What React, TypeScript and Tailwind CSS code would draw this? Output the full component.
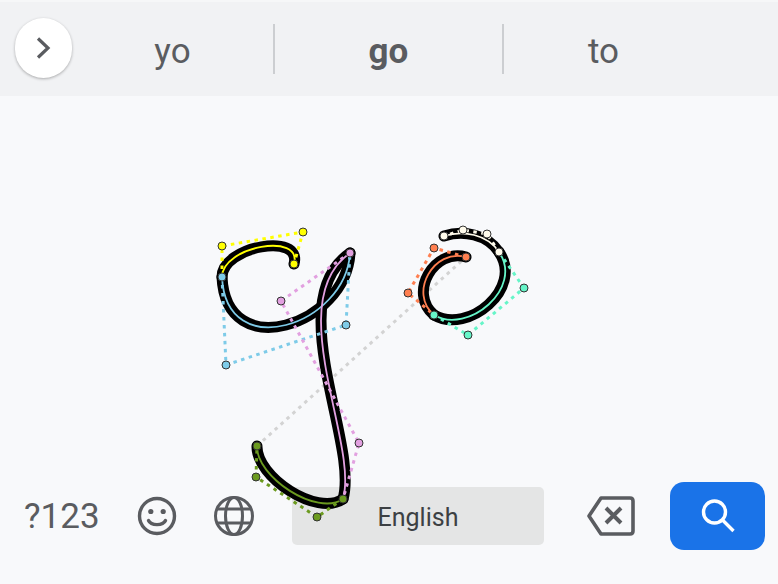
const curves = [
  { color: "#ffff00", d: "M222 277C222 246 303 232 294 264", pts: [[222, 246], [303, 232], [294, 264]], guide: "M222 277L222 246L303 232L294 264" },
  { color: "#7ecbe8", d: "M222 277C226 365 346 325 350 253", pts: [[222, 277], [226, 365], [346, 325]], guide: "M222 277L226 365L346 325L350 253" },
  { color: "#e2a0e0", d: "M350 253C281 301 359 443 343 499", pts: [[350, 253], [281, 301], [359, 443]], guide: "M350 253L281 301L359 443L343 499" },
  { color: "#6b9a1f", d: "M343 499C317 517 256 477 257 446", pts: [[343, 499], [317, 517], [256, 477], [257, 446]], guide: "M343 499L317 517L256 477L257 446" },
  { color: "#ff7f50", d: "M466 257C434 248 408 293 434 315", pts: [[466, 257], [434, 248], [408, 293]], guide: "M466 257L434 248L408 293L434 315" },
  { color: "#66f5c8", d: "M434 315C468 335 524 288 499 252", pts: [[434, 315], [468, 335], [524, 288]], guide: "M434 315L468 335L524 288L499 252" },
  { color: "#fffbeb", d: "M499 252C487 234 463 230 444 236", pts: [[499, 252], [487, 234], [463, 230], [444, 236]], guide: "M499 252L487 234L463 230L444 236" },
];

function Stroke() {
  return (
    <svg className="absolute inset-0 pointer-events-none" width="778" height="584" viewBox="0 0 778 584" fill="none">
      <path d="M257 446L466 257" stroke="#d3d3d3" strokeWidth="3" strokeDasharray="3.5 4.5" />
      {curves.map((c) => (
        <path key={c.d} d={c.d} stroke="#000" strokeWidth="11" strokeLinecap="round" />
      ))}
      {curves.map((c) => (
        <g key={c.guide}>
          <path d={c.guide} stroke={c.color} strokeWidth="3" strokeDasharray="3.5 4.5" />
          <path d={c.d} stroke={c.color} strokeWidth="1.8" strokeLinecap="round" />
          {c.pts.map(([x, y]) => (
            <circle key={`${x}-${y}`} cx={x} cy={y} r="4" fill={c.color} stroke="#333" strokeWidth="1" />
          ))}
        </g>
      ))}
    </svg>
  );
}

export default function App() {
  return (
    <div className="relative w-[778px] h-[584px] overflow-hidden bg-[#f8f9fb] flex flex-col font-['Roboto',sans-serif]">
      {/* Suggestions */}
      <div className="h-[96px] bg-[#f1f2f4] border-t-2 border-[#f6f7f8] flex items-center">
        <button className="ml-[15px] mb-[3px] w-[57px] h-[60px] rounded-full bg-white shadow-[0_1px_3px_rgba(0,0,0,0.3)] flex items-center justify-center">
          <svg width="18" height="24" viewBox="0 0 18 24" fill="none" stroke="#5a5c60" strokeWidth="3.2">
            <path d="M3 2.5L13 12L3 21.5" />
          </svg>
        </button>
        <div className="w-[201px] pt-[6px] text-center text-[35px] text-[#5a5c60]">yo</div>
        <div className="w-[2px] h-[50px] bg-[#ccced1]"></div>
        <div className="w-[227px] pt-[6px] text-center text-[35px] font-bold text-[#5a5c60]">go</div>
        <div className="w-[2px] h-[50px] bg-[#ccced1]"></div>
        <div className="w-[199px] pt-[6px] text-center text-[35px] text-[#5a5c60]">to</div>
      </div>

      <div className="flex-1"></div>

      {/* Bottom row */}
      <div className="h-[68px] mb-[34px] flex items-center">
        <div className="ml-[24px] w-[75px] text-[35px] leading-none text-[#5a5c60] whitespace-nowrap">?123</div>
        <svg className="ml-[37px]" width="42" height="42" viewBox="0 0 42 42" fill="none" stroke="#5a5c60" strokeWidth="3.4">
          <circle cx="21" cy="21" r="17.5" />
          <circle cx="14.8" cy="16.5" r="2.6" fill="#5a5c60" stroke="none" />
          <circle cx="27.2" cy="16.5" r="2.6" fill="#5a5c60" stroke="none" />
          <path d="M12.5 25.5C15 31 27 31 29.5 25.5" strokeLinecap="round" />
        </svg>
        <svg className="ml-[34px]" width="44" height="44" viewBox="0 0 44 44" fill="none" stroke="#5a5c60" strokeWidth="3">
          <circle cx="22" cy="22" r="18.5" />
          <ellipse cx="22" cy="22" rx="8.5" ry="18.5" />
          <path d="M5.5 15H38.5M5.5 29H38.5" />
        </svg>
        <div className="ml-[36px] w-[252px] h-[58px] bg-[#e4e5e5] rounded-[5px] flex items-center justify-center pt-[3px] text-[25px] text-[#3c4043]">
          English
        </div>
        <svg className="ml-[42px]" width="50" height="42" viewBox="0 0 50 42" fill="none" stroke="#5a5c60" strokeWidth="3.6" strokeLinejoin="round">
          <path d="M15 3H44C46 3 47 4 47 6V36C47 38 46 39 44 39H15L3 21Z" />
          <path d="M20 13L35 28M35 13L20 28" strokeWidth="4" />
        </svg>
        <button className="ml-[34px] w-[95px] h-[68px] bg-[#1a73e8] rounded-[14px] flex items-center justify-center">
          <svg width="36" height="36" viewBox="0 0 36 36" fill="none" stroke="#fff" strokeWidth="3.4">
            <circle cx="14.5" cy="14" r="11" />
            <path d="M22.5 22L33.5 33" />
          </svg>
        </button>
      </div>

      <Stroke />
    </div>
  );
}
